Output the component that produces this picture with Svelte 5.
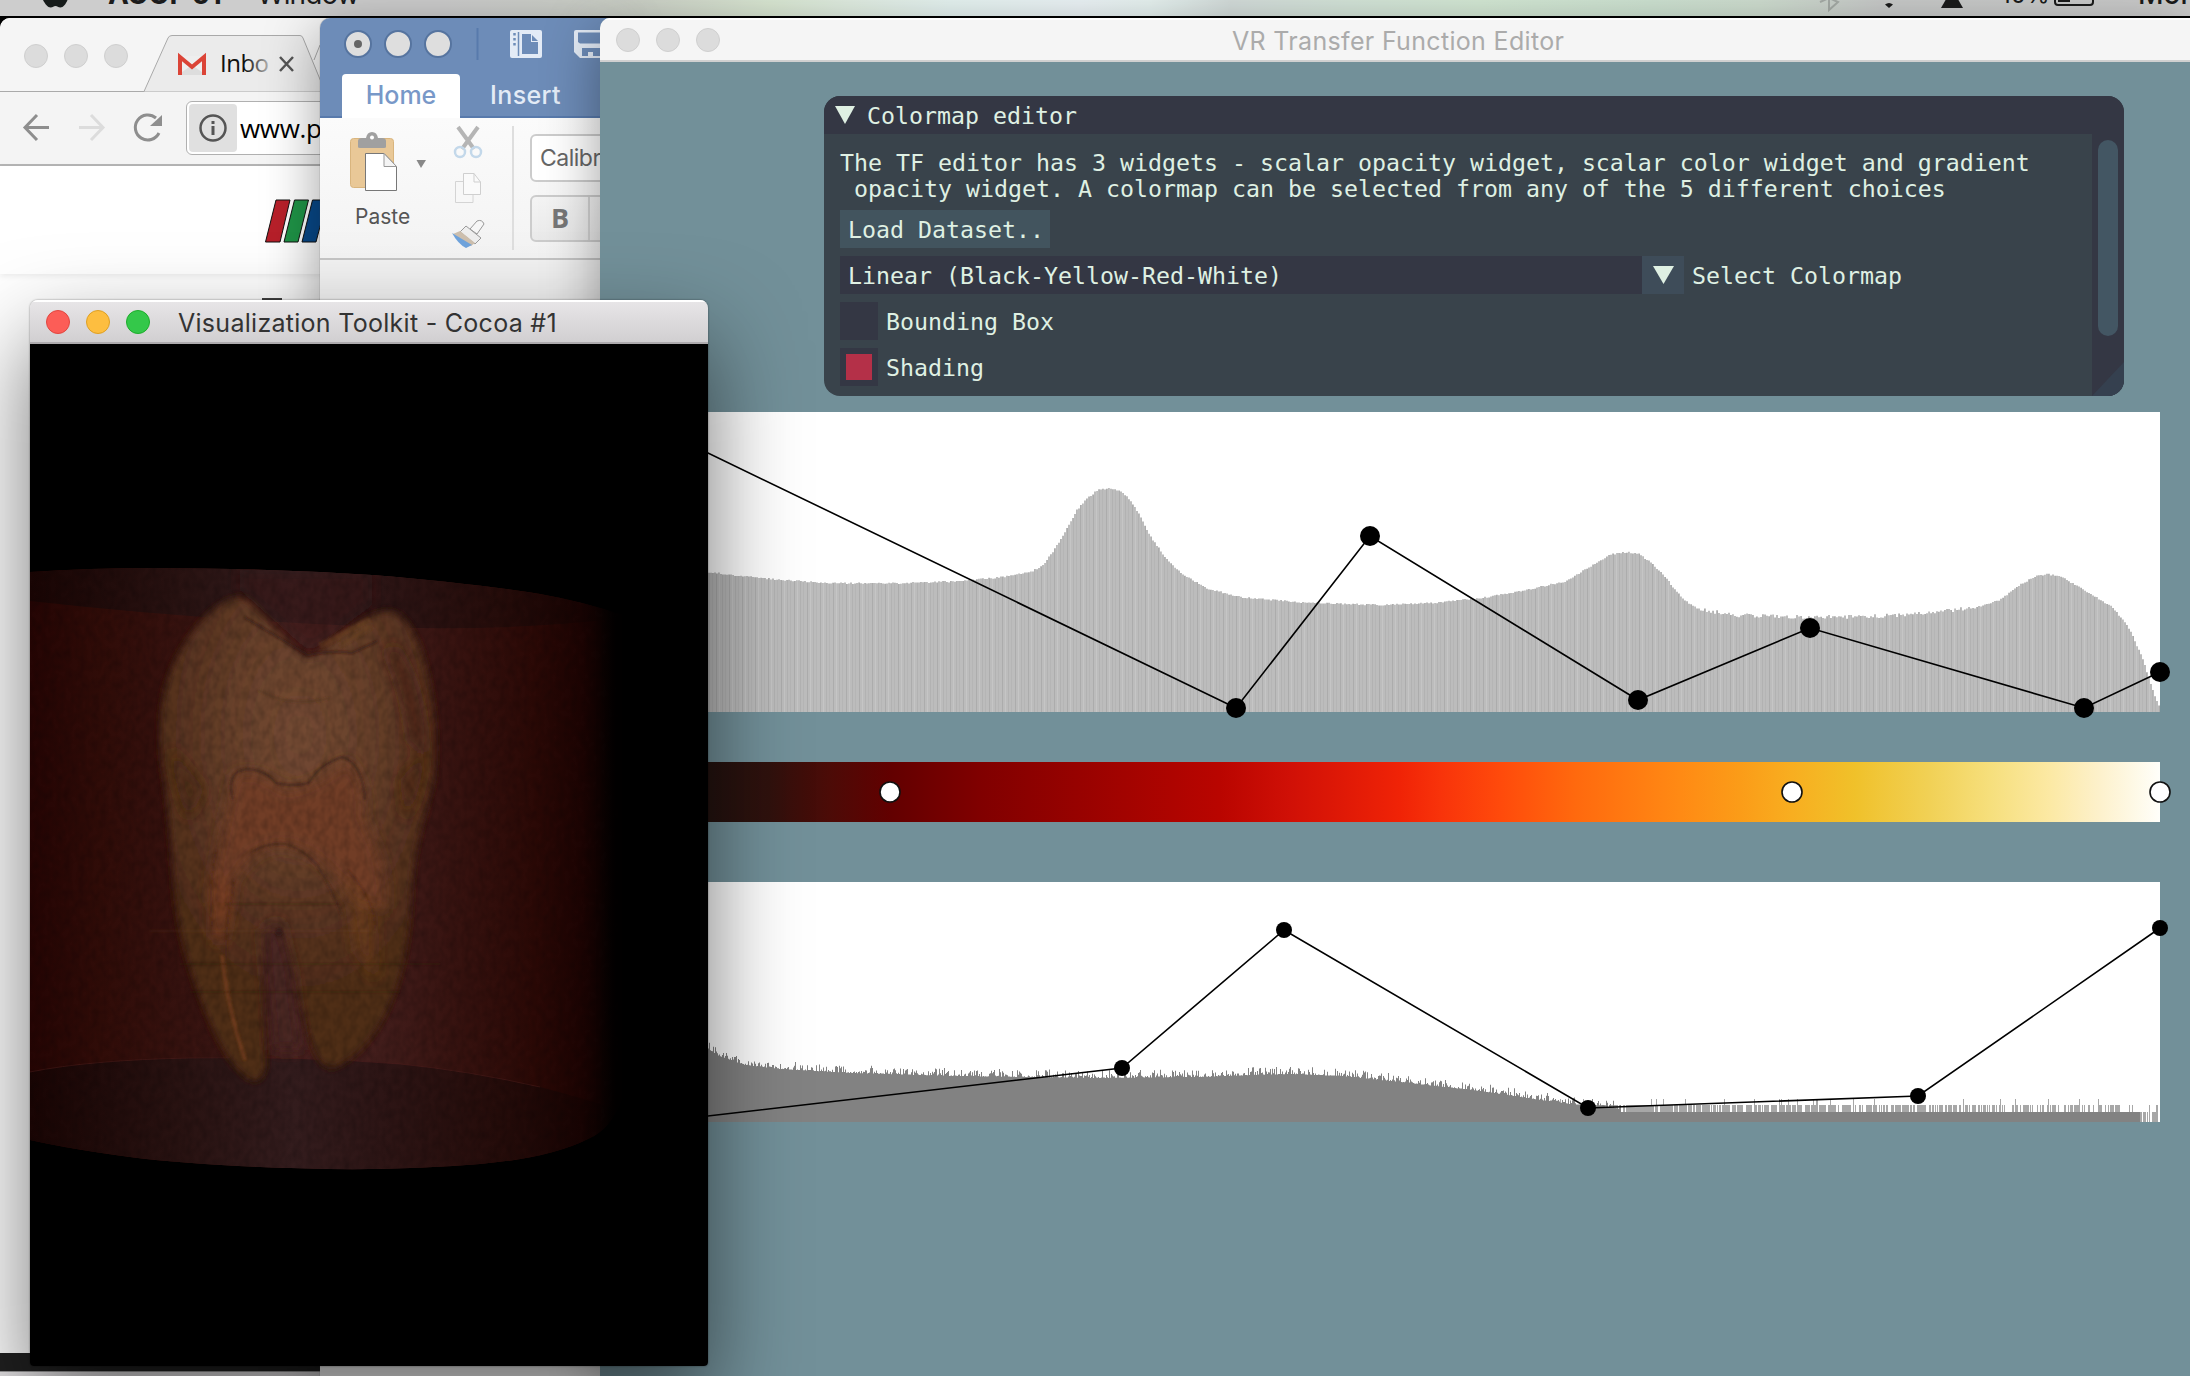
<script>
  // Deterministic pseudo-random jitter for the histogram tops
  const rnd = (i) => {
    const v = Math.sin(i * 127.1 + 11.7) * 43758.5453;
    return v - Math.floor(v);
  };

  function sample(points, x) {
    for (let i = 1; i < points.length; i++) {
      const [x0, y0] = points[i - 1];
      const [x1, y1] = points[i];
      if (x <= x1) return y0 + ((x - x0) / (x1 - x0)) * (y1 - y0);
    }
    return points[points.length - 1][1];
  }

  const scalarCurve = [
    [630, 560], [708, 573], [760, 579], [800, 582], [830, 584], [900, 584], [960, 582], [1000, 578],
    [1030, 573], [1042, 566], [1052, 553], [1064, 533], [1076, 511], [1086, 499], [1097, 491],
    [1108, 489], [1118, 491], [1126, 497], [1136, 511], [1148, 535], [1165, 559], [1180, 574],
    [1205, 589], [1240, 598], [1300, 603], [1380, 606], [1440, 603], [1480, 599], [1530, 590],
    [1565, 582], [1590, 567], [1608, 556], [1618, 553.5], [1627, 553], [1638, 555], [1650, 563],
    [1662, 575], [1673, 589], [1683, 601], [1700, 611], [1730, 617], [1800, 619], [1860, 619],
    [1920, 616], [1970, 610], [2000, 600], [2020, 585], [2035, 577], [2048, 575], [2062, 578],
    [2085, 592], [2110, 607], [2120, 618], [2130, 632], [2143, 663], [2151, 688], [2156, 702], [2160, 712]
  ];
  const gradientCurve = [
    [630, 960], [690, 1035], [708, 1049], [720, 1057], [745, 1065], [780, 1069], [850, 1073],
    [950, 1076], [1100, 1078], [1200, 1077], [1290, 1074], [1340, 1076], [1400, 1082],
    [1480, 1091], [1540, 1100], [1570, 1104], [1600, 1106], [1640, 1112], [2160, 1112]
  ];

  let scalarPath = 'M630 712';
  for (let x = 630; x < 2160; x += 2) {
    const y = sample(scalarCurve, x) - rnd(x) * (x > 1700 && x < 1970 ? 4 : 1.6);
    scalarPath += `V${y.toFixed(1)}H${x + 2}`;
  }
  scalarPath += 'V712Z';

  let gradientPath = 'M630 1122';
  for (let x = 630; x < 2140; x += 1) {
    const r = rnd(x + 0.3);
    let y = sample(gradientCurve, x) - r * r * r * 8;
    if (x > 1620) y = 1112;
    gradientPath += `V${y.toFixed(1)}H${x + 1}`;
  }
  gradientPath += 'V1122Z';

  // Thin outliers in the tail of the gradient histogram
  let tailPath = '';
  for (let x = 1560; x < 2158; x += 1) {
    const density = x < 1700 ? 0.12 : x < 1850 ? 0.25 : x < 2000 ? 0.4 : x < 2120 ? 0.55 : 0.85;
    if (rnd(x * 1.7) > density) {
      const tall = rnd(x * 3.1) > 0.93 ? 6 : 0;
      tailPath += `M${x} 1112V${1105 - tall}h1V1112Z`;
    }
    if (x >= 2140 && rnd(x * 2.3) > 0.35) tailPath += `M${x} 1122V1112h1V1122Z`;
  }

  const scalarLine = [[630, 415.3], [1236, 708], [1370, 536], [1638, 700], [1810, 628], [2084, 708], [2160, 672]];
  const gradientLine = [[630, 1125], [1122, 1068], [1284, 930], [1588, 1108], [1918, 1096], [2160, 928]];
  const colorStops = [890, 1792, 2160];
  const toPoints = (pts) => pts.map((p) => p.join(',')).join(' ');

  const colormap = [
    [708, '#241310'], [770, '#30110d'], [830, '#4c0b07'], [890, '#620000'], [980, '#800000'],
    [1220, '#b90500'], [1290, '#d01006'], [1400, '#f02306'], [1440, '#f8330a'], [1500, '#ff4a0b'],
    [1575, '#ff690e'], [1680, '#ff8a14'], [1740, '#fb9c18'], [1792, '#f8ae20'], [1855, '#f0c12a'],
    [1930, '#f1d156'], [1990, '#f6df7c'], [2050, '#fce9a4'], [2100, '#fdf1cc'], [2160, '#fffffa']
  ];
</script>

<div class="desktop">
  <header class="menubar">
    <svg class="apple" width="28" height="16" viewBox="0 0 28 16"><path d="M2 0C4 4 7 7.500 9.500 7.500C12 7.500 12.500 6 14.500 6C16.500 6 17 7.500 19.500 7.500C22 7.500 25 4 26.500 0Z" /></svg>
    <b class="app">AOOF 01</b>
    <span class="item">Window</span>
    <svg class="status" width="280" height="16" viewBox="1815 0 280 16">
      <path d="M1820 2L1838 -6M1820 -6L1838 2L1829 10V0" fill="none" stroke="#a6aca7" stroke-width="2" />
      <path d="M1885 4.500Q1889 1.500 1893 4.500L1889 8Z" />
      <path d="M1941 8L1949 -6H1955L1963 8Z" />
      <rect x="2055" y="-10" width="38" height="15" rx="3" fill="none" stroke="#1b1b1b" stroke-width="2" />
      <rect x="2058" y="-4" width="12" height="6" />
      <text x="2001" y="3" class="pct">10%</text>
    </svg>
    <span class="clock">Mon</span>
  </header>

  <!-- Browser -->
  <section class="window browser">
    <div class="tabs">
      <div class="lights"><i></i><i></i><i></i></div>
      <svg width="190" height="74" viewBox="140 18 190 74">
        <defs>
          <linearGradient id="fade" x1="221" x2="270" y1="0" y2="0" gradientUnits="userSpaceOnUse">
            <stop offset=".5" stop-color="#111" /><stop offset="1" stop-color="#bbb" />
          </linearGradient>
        </defs>
        <path d="M140 91.500H144L168 38Q169 35.500 172 35.500H300Q302 35.500 303 38L325 91.500" fill="#ebebeb" stroke="#a9a9a9" />
        <path d="M314 60L320 45" stroke="#a9a9a9" />
        <path d="M178 56V75H206V56Z" fill="#eee" />
        <path d="M178 75L192 65L206 75Z" fill="#ddd" />
        <path d="M180 75V57L192 67L204 57V75" fill="none" stroke="#db4437" stroke-width="4" />
        <text x="220" y="72" class="tabtext" fill="url(#fade)">Inbo</text>
        <path d="M280 57L293 71M293 57L280 71" stroke="#555" stroke-width="2.500" />
      </svg>
    </div>
    <div class="address">
      <svg class="nav" width="186" height="72" viewBox="0 92 186 72" fill="none" stroke-width="3">
        <g stroke="#8e8e8e"><path d="M49 127.500H25M37 115L25 127.500L37 140" /><path d="M159 133A12.500 12.500 0 1 1 156 118" /></g>
        <path d="M162 115V126H150Z" fill="#8e8e8e" />
        <path d="M79 127.500H103M91 115L103 127.500L91 140" stroke="#dcdcdc" />
      </svg>
      <div class="url">
        <span class="info"><svg width="30" height="30" viewBox="0 0 30 30"><circle cx="15" cy="15" r="12.500" fill="none" stroke="#555" stroke-width="2.500" /><path d="M15 13V22M15 8V11" stroke="#555" stroke-width="3" /></svg></span>
        <span>www.p</span>
      </div>
    </div>
    <div class="page">
      <div class="hero">
        <svg width="60" height="44" viewBox="264 199 60 44" stroke="#111">
          <path d="M276 200H290L280 242H265.500Z" fill="#b8202a" />
          <path d="M294.500 200H308.500L298 242H284Z" fill="#1f9447" />
          <path d="M312.500 200H327L316 242H302Z" fill="#08498a" />
        </svg>
      </div>
      <div class="mark"></div>
    </div>
    <div class="dark"></div>
    <div class="foot"></div>
  </section>

  <!-- Word processor -->
  <section class="window word">
    <div class="ribbonhead">
      <svg class="quick" width="280" height="44" viewBox="320 18 280 44">
        <g fill="#dedede" stroke="#56749f" stroke-width="2"><circle cx="358" cy="44" r="13" /><circle cx="398" cy="44" r="13" /><circle cx="438" cy="44" r="13" /></g>
        <circle cx="358" cy="44" r="4" fill="#666" />
        <path d="M477.500 28V60" stroke="#587aac" stroke-width="2" />
        <path d="M512 30H540Q542 30 542 32V56Q542 58 540 58H512Q510 58 510 56V32Q510 30 512 30Z" fill="#e3ebf6" />
        <path d="M518.500 32V56" stroke="#6d8cb8" stroke-width="1.500" />
        <path d="M514.500 33V46" stroke="#6d8cb8" stroke-width="2.500" stroke-dasharray="2.500 2.500" />
        <path d="M522 34H531V42H538V54H522Z" fill="#6d8cb8" /><path d="M532 35V41H538Z" fill="#6d8cb8" />
        <path d="M576 30H602V58H580L574 52V32Q574 30 576 30Z" fill="#e3ebf6" />
        <path d="M578 32.500H602V43.500H580L578 42ZM582 48H602V56H593V52H588V56H582Z" fill="#6d8cb8" />
      </svg>
      <div class="wtabs"><span class="home">Home</span><span class="insert">Insert</span></div>
    </div>
    <div class="ribbon">
      <div class="paste">
        <svg width="80" height="66" viewBox="346 130 80 66">
          <rect x="350.500" y="138.500" width="43" height="49" rx="3" fill="#e9c897" stroke="#d9b57e" />
          <path d="M358 147V141Q358 138 362 138H366Q367 132 372 132Q377 132 378 138H382Q386 138 386 141V147Q386 148 384 148H360Q358 148 358 147Z" fill="#a0a0a0" />
          <circle cx="372" cy="137.500" r="2" fill="#fff" />
          <path d="M365.500 153.500H384L396.500 166.500V190.500H365.500Z" fill="#fff" stroke="#777" /><path d="M384 153.500V166.500H396.500Z" fill="#f4f4f4" stroke="#999" />
          <path d="M416.500 160H426L421 168Z" fill="#888" />
        </svg>
        <span>Paste</span>
      </div>
      <svg class="edit" width="40" height="132" viewBox="448 122 40 132">
        <path d="M458 127L474 149M478 127L462 149" stroke="#b5b5b5" stroke-width="4" />
        <g fill="none" stroke="#c3d8ea" stroke-width="2.500"><circle cx="460" cy="152" r="5" /><circle cx="476" cy="152" r="5" /></g>
        <path d="M455.500 181.500H473V202.500H455.500Z" fill="#f7f7f7" stroke="#d4d4d4" /><path d="M463.500 173.500H474L480.500 182V194.500H463.500Z" fill="#fafafa" stroke="#cfcfcf" /><path d="M474 173.500V182H480.500" fill="none" stroke="#cfcfcf" />
        <path d="M470 229L477 221Q482 219 484 224L477 234Z" fill="#f6f6f6" stroke="#999" />
        <path d="M466 226L481 238L475 244L460 232Z" fill="#eee" stroke="#999" />
        <path d="M460 231L475 243L471 246L453 234Z" fill="#cdbfae" />
        <path d="M452 233L472 245L466 248Q458 244 452 233Z" fill="#6fa3dc" />
      </svg>
      <div class="fonts"><div class="fontname">Calibri</div><div class="bold"><b>B</b></div></div>
    </div>
  </section>

  <!-- Transfer function editor -->
  <section class="window editor">
    <div class="titlebar"><div class="lights"><i></i><i></i><i></i></div><span class="title">VR Transfer Function Editor</span></div>
    <div class="canvas">
      <div class="panel">
        <div class="panelhead"><svg width="20" height="18"><path d="M0 0H20L10 18Z" /></svg><span>Colormap editor</span></div>
        <div class="panelbody">
          <div class="controls">
            <p>The TF editor has 3 widgets - scalar opacity widget, scalar color widget and gradient
 opacity widget. A colormap can be selected from any of the 5 different choices</p>
            <div class="button">Load Dataset..</div>
            <div class="row"><div class="combo">Linear (Black-Yellow-Red-White)</div><div class="drop"><svg width="21" height="18"><path d="M0 0H21L10.500 18Z" /></svg></div><span>Select Colormap</span></div>
            <div class="row"><div class="check"></div><span>Bounding Box</span></div>
            <div class="row"><div class="check"><i></i></div><span>Shading</span></div>
          </div>
          <div class="scroll"><div class="thumb"></div><svg width="32" height="34"><path class="grip" d="M32 0V34H0Z" /></svg></div>
        </div>
      </div>

      <svg class="chart scalar" width="1530" height="300" viewBox="630 412 1530 300">
        <defs>
          <pattern id="bars" width="13" height="10" patternUnits="userSpaceOnUse">
            <rect width="13" height="10" fill="#bcbcbc" /><rect x="1" width="1" height="10" fill="#acacac" /><rect x="4" width="1" height="10" fill="#c5c5c5" /><rect x="7" width="1" height="10" fill="#b2b2b2" /><rect x="10" width="1" height="10" fill="#b5b5b5" />
          </pattern>
        </defs>
        <rect x="630" y="412" width="1530" height="300" fill="#fff" />
        <path d={scalarPath} fill="url(#bars)" />
        <polyline points={toPoints(scalarLine)} fill="none" stroke="#000" stroke-width="1.600" />
        {#each scalarLine as [x, y]}<circle cx={x} cy={y} r="10" />{/each}
      </svg>

      <svg class="chart colors" width="1530" height="60" viewBox="630 762 1530 60">
        <defs>
          <linearGradient id="cmap" gradientUnits="userSpaceOnUse" x1="708" x2="2160" y1="0" y2="0">
            {#each colormap as [x, c]}<stop offset={(x - 708) / 1452} stop-color={c} />{/each}
          </linearGradient>
        </defs>
        <rect x="630" y="762" width="1530" height="60" fill="url(#cmap)" />
        {#each colorStops as x}<circle cx={x} cy="792" r="10" fill="#fff" stroke="#111" stroke-width="1.600" />{/each}
      </svg>

      <svg class="chart gradient" width="1530" height="240" viewBox="630 882 1530 240">
        <rect x="630" y="882" width="1530" height="240" fill="#fff" />
        <path d={gradientPath} fill="#828282" />
        <path d={tailPath} fill="#828282" fill-opacity=".7" shape-rendering="crispEdges" />
        <polyline points={toPoints(gradientLine)} fill="none" stroke="#000" stroke-width="1.600" />
        {#each gradientLine as [x, y]}<circle cx={x} cy={y} r="8" />{/each}
      </svg>
    </div>
  </section>

  <!-- Volume rendering -->
  <section class="window volume">
    <div class="titlebar active"><div class="lights"><i class="red"></i><i class="yellow"></i><i class="green"></i></div><span class="title">Visualization Toolkit - Cocoa #1</span></div>
    <svg class="render" width="678" height="1022" viewBox="30 344 678 1022">
      <defs>
        <linearGradient id="wall" gradientUnits="userSpaceOnUse" x1="30" x2="616" y1="0" y2="0">
          <stop offset="0" stop-color="#250504" /><stop offset=".12" stop-color="#300c08" /><stop offset=".3" stop-color="#381411" /><stop offset=".45" stop-color="#47211f" /><stop offset=".6" stop-color="#421d1b" /><stop offset=".72" stop-color="#371310" /><stop offset=".86" stop-color="#2b0906" /><stop offset=".94" stop-color="#1d0403" /><stop offset="1" stop-color="#050101" />
        </linearGradient>
        <linearGradient id="cap" gradientUnits="userSpaceOnUse" x1="30" x2="616" y1="0" y2="0">
          <stop offset="0" stop-color="#190504" /><stop offset=".25" stop-color="#281211" /><stop offset=".45" stop-color="#331c1d" /><stop offset=".6" stop-color="#2d1515" /><stop offset=".8" stop-color="#250c0a" /><stop offset=".94" stop-color="#180403" /><stop offset="1" stop-color="#050101" />
        </linearGradient>
        <radialGradient id="enamel" gradientUnits="userSpaceOnUse" cx="300" cy="735" r="190" gradientTransform="translate(300 735) scale(.82 1.35) translate(-300 -735)">
          <stop offset="0" stop-color="#734932" /><stop offset=".4" stop-color="#69422c" /><stop offset=".75" stop-color="#593421" /><stop offset="1" stop-color="#502d19" />
        </radialGradient>
        <filter id="soft" x="-10%" y="-10%" width="120%" height="120%"><feGaussianBlur stdDeviation="3" /></filter>
        <filter id="soft1"><feGaussianBlur stdDeviation="1.200" /></filter>
        <filter id="soft6" x="-30%" y="-30%" width="160%" height="160%"><feGaussianBlur stdDeviation="7" /></filter>
        <filter id="edge" x="-100%" width="300%" y="-10%" height="120%"><feGaussianBlur stdDeviation="9" /></filter>
        <filter id="grain" x="0" y="0" width="100%" height="100%">
          <feTurbulence type="fractalNoise" baseFrequency=".14 .1" numOctaves="2" seed="4" />
          <feColorMatrix values="0 0 0 0 0  0 0 0 0 0  0 0 0 0 0  .9 0 0 0 -.3" />
        </filter>
        <clipPath id="body"><path d="M30 572Q90 568 154 568Q260 568 372 575Q470 583 540 594Q585 602 622 615V1100Q610 1130 588 1139Q550 1158 480 1164Q410 1170 330 1169Q210 1167 130 1157Q70 1149 30 1140Z" /></clipPath>
      </defs>
      <rect x="30" y="344" width="678" height="1022" />
      <g clip-path="url(#body)">
        <rect x="30" y="560" width="594" height="620" fill="url(#wall)" />
        <path d="M30 560H624V618Q500 632 380 627Q200 620 30 601Z" fill="url(#cap)" />
        <path d="M30 1072Q90 1060 190 1058Q300 1056 400 1064Q470 1071 540 1087Q590 1100 624 1112V1180H30Z" fill="url(#cap)" />
        <path d="M30 1072Q90 1060 190 1058Q300 1056 400 1064Q470 1071 540 1087" fill="none" stroke="#51201d" stroke-opacity=".5" />
        <g filter="url(#soft)">
          <path d="M236 597C215 603 195 625 180 650C162 680 157 720 161 760C167 800 170 830 173 880C176 930 188 970 205 1012C218 1045 233 1070 250 1080C260 1084 267 1076 266 1058C264 1010 262 970 268 945Q276 925 284 944C290 975 300 1000 307 1030C314 1060 325 1072 337 1067C355 1058 374 1040 388 1010C404 975 410 940 412 890C415 840 428 810 434 780C439 740 434 690 422 650C412 624 400 610 386 611C365 614 345 630 318 652Q308 661 297 650C278 630 262 612 250 600Q243 595 236 597Z" fill="url(#enamel)" stroke="#2a0e0a" stroke-width="4" stroke-opacity=".5" />
        </g>
        <g filter="url(#soft6)">
          <path d="M262 930L280 920L292 970L302 1050H272Z" fill="#482524" />
          <path d="M234 775Q255 765 285 790Q320 785 345 760Q365 770 365 820Q390 870 385 910L350 900Q325 850 280 845Q240 850 222 910L208 900Q222 830 234 775Z" fill="#713d28" />
          <path d="M212 870L234 890L224 940L214 940Z" fill="#783c22" />
          <path d="M345 870L372 900L376 980L356 950Z" fill="#70401f" fill-opacity=".7" />
          <path d="M395 645Q425 690 426 760L410 740Q405 690 385 650Z" fill="#482319" fill-opacity=".8" />
          <path d="M170 745Q175 790 188 820L205 790Q188 770 170 745Z" fill="#4a270f" fill-opacity=".7" />
          <path d="M425 750Q420 800 405 820L400 780Z" fill="#4a2710" fill-opacity=".8" />
          <path d="M240 590L310 652L372 605V570H240Z" fill="#3a1c1c" fill-opacity=".45" />
        </g>
        <g fill="none" filter="url(#soft1)">
          <path d="M222 955Q228 1010 245 1060" stroke="#84451f" stroke-width="4" stroke-opacity=".55" />
          <path d="M233 800Q225 770 248 769Q266 770 276 783Q292 787 309 783Q318 765 342 757Q362 762 365 800" stroke="#3b2118" stroke-width="2" stroke-opacity=".75" />
          <path d="M252 852Q265 843 285 844Q302 848 318 866Q332 890 342 915" stroke="#4a2a1e" stroke-width="1.600" />
          <path d="M234 880Q225 930 226 960M216 850Q208 890 212 925M348 870Q375 900 375 930" stroke="#4a2618" stroke-width="1.500" stroke-opacity=".6" />
          <path d="M244 617L308 655Q330 650 352 653L378 641" stroke="#32170f" stroke-width="2.500" stroke-opacity=".6" />
          <path d="M320 646L370 620M340 645L372 626" stroke="#704522" stroke-width="6" stroke-opacity=".5" />
          <path d="M258 690Q290 708 330 698" stroke="#54351f" stroke-width="2" stroke-opacity=".6" />
          <path d="M180 964H440M190 992H400M225 904H340" stroke="#2a100c" stroke-width="2" stroke-opacity=".35" />
          <path d="M150 931H370" stroke="#824b36" stroke-opacity=".3" />
          <circle cx="279" cy="932" r="4" fill="#2e1416" fill-opacity=".6" />
        </g>
        <rect x="30" y="560" width="594" height="620" filter="url(#grain)" opacity=".38" />
      </g>
      <rect x="612" y="560" width="20" height="620" filter="url(#edge)" />
    </svg>
  </section>
</div>

<style>
  :global(body) { margin: 0; overflow: hidden; }
  .desktop { position: relative; width: 2190px; height: 1376px; overflow: hidden; background: #000; font-family: Inter, "Liberation Sans", sans-serif; }
  .menubar { box-sizing: border-box; display: flex; height: 16px; padding-left: 41px; overflow: hidden; color: #1b1b1b; font-size: 28px; line-height: 0; background: linear-gradient(90deg, #cdcdcd 0, #cdcdcd 440px, #cdd2c8 640px, #dbe9d4 770px, #e2efe3 850px, #e7f5f3 950px, #edf5f8 1080px, #e8f4f2 1150px, #d5dedc 1230px, #d5e6da 1350px, #d5ead6 1480px, #cfe4d3 1650px, #d0dfd1 1760px, #c9cbca 1880px, #cbcbcb 2190px); }
  .apple { fill: #161b1a; flex: none; }
  .app, .item, .clock { flex: none; margin-top: -6px; white-space: nowrap; }
  .app { width: 149px; margin-left: 39px; letter-spacing: -.5px; }
  .item { width: 1558px; letter-spacing: -.9px; }
  .status { flex: none; fill: #1b1b1b; }
  .pct { font-size: 24px; }
  .clock { margin-left: 43px; font-weight: 500; }

  .window { position: absolute; display: flex; flex-direction: column; overflow: hidden; }
  .lights { display: flex; gap: 16px; }
  .lights i { box-sizing: border-box; width: 24px; height: 24px; border: 1px solid #cfcfcf; border-radius: 50%; background: #dcdcdc; }

  .browser { left: 0; top: 18px; width: 340px; height: 1358px; border-radius: 10px 0 0 0; background: #fff; }
  .tabs { display: flex; height: 74px; background: #f5f5f5; box-shadow: inset 0 -1px #aaa; }
  .tabs .lights { width: 116px; padding: 26px 0 0 24px; }
  .tabtext { font: 24px "Open Sans", sans-serif; letter-spacing: -.5px; }
  .address { display: flex; height: 72px; border-bottom: 2px solid #b5b5b5; background: #f4f4f4; }
  .nav { flex: none; }
  .url { box-sizing: border-box; flex: none; display: flex; align-items: center; gap: 3px; width: 200px; height: 54px; margin-top: 9px; padding-left: 2px; border: 1px solid #b0b0b0; border-radius: 6px; background: #fff; font: 26px "Open Sans", sans-serif; letter-spacing: -.3px; }
  .info { display: grid; place-items: center; width: 48px; height: 48px; border-radius: 4px; background: #e0e0e0; flex: none; }
  .page { display: flex; flex-direction: column; height: 1188px; }
  .hero { box-sizing: border-box; flex: none; height: 108px; padding: 33px 0 0 264px; box-shadow: 0 2px 6px rgba(0, 0, 0, .08); }
  .mark { width: 20px; height: 2px; margin: 24px 0 0 262px; background: #444; }
  .dark { height: 18px; background: #202020; }
  .foot { height: 4px; border-top: 1px solid #999; background: #e6e4e6; }

  .word { left: 320px; top: 18px; width: 290px; height: 1358px; border-radius: 10px 0 0 0; background: #f2f2f2; box-shadow: 0 14px 56px rgba(0, 0, 0, .38), 0 0 1px #555; }
  .ribbonhead { display: flex; flex-direction: column; height: 100px; background: #6d8cb8; box-shadow: inset 0 -2px #587aac; }
  .quick { flex: none; }
  .wtabs { display: flex; height: 44px; margin-top: 12px; padding-left: 22px; font-size: 25px; line-height: 42px; }
  .home { box-sizing: border-box; width: 118px; border-radius: 4px 4px 0 0; background: #fff; color: #7898c8; font-weight: 500; text-align: center; }
  .insert { margin-left: 30px; color: #e3ebf6; font-weight: 500; letter-spacing: .4px; }
  .ribbon { display: flex; height: 140px; border-bottom: 2px solid #c6c6c6; background: linear-gradient(#fbfbfb, #f3f3f3); }
  .paste { flex: none; display: flex; flex-direction: column; width: 80px; margin: 12px 0 0 26px; }
  .paste span { margin: 7px 0 0 9px; color: #555; font-size: 21px; line-height: 28px; }
  .edit { flex: none; margin: 4px 0 0 22px; }
  .fonts { flex: none; margin: 8px 0 0 24px; padding: 8px 0 0 16px; width: 80px; height: 116px; border-left: 2px solid #dedede; }
  .fontname, .bold { box-sizing: border-box; width: 90px; height: 48px; border: 2px solid #ccc; border-radius: 6px; background: #fff; color: #666; }
  .fontname { padding-left: 8px; font-size: 23px; letter-spacing: -.5px; line-height: 44px; }
  .bold { height: 47px; margin-top: 13px; background: linear-gradient(#f4f4f4, #eaeaea); font: 27px/42px "Open Sans", sans-serif; color: #777; }
  .bold b { display: block; width: 56px; height: 43px; border-right: 2px solid #d4d4d4; text-align: center; }

  .editor { left: 600px; top: 18px; width: 1590px; height: 1358px; border-radius: 10px 0 0 0; background: #729099; box-shadow: 0 14px 56px rgba(0, 0, 0, .38); }
  .titlebar { position: relative; box-sizing: border-box; flex: none; display: flex; align-items: flex-start; height: 44px; padding: 10px 0 0 16px; border-bottom: 2px solid #d0d0d0; background: #f5f5f5; box-shadow: inset 0 2px #fff; color: #ababab; font-size: 25px; line-height: 26px; }
  .title { white-space: nowrap; }
  .editor .title { margin-left: 512px; letter-spacing: .32px; }
  .canvas { padding: 34px 0 0 30px; }
  .panel { width: 1300px; height: 300px; margin-left: 194px; border-radius: 16px; overflow: hidden; background: #39434b; color: #dff0e3; font: 23.25px/26px "DejaVu Sans Mono", monospace; white-space: nowrap; }
  .panel svg { fill: #dff0e3; }
  .panel .grip { fill: #35404f; }
  .panelhead { display: flex; align-items: center; height: 38px; padding-left: 11px; background: #343744; }
  .panelhead span { margin: 2px 0 0 12px; }
  .panelbody { display: flex; justify-content: space-between; height: 262px; }
  .controls { display: flex; flex-direction: column; gap: 8px; padding: 16px 0 0 16px; }
  .controls p { margin: 0; height: 52px; white-space: pre; }
  .button { align-self: flex-start; box-sizing: border-box; width: 210px; height: 38px; padding-left: 8px; line-height: 39px; background: #42545e; }
  .row { display: flex; height: 38px; line-height: 39px; }
  .combo { box-sizing: border-box; width: 802px; padding-left: 8px; background: #343744; }
  .drop { display: grid; place-items: center; width: 42px; background: #3e4c59; }
  .row span { margin-left: 8px; }
  .check { display: grid; place-items: center; width: 38px; height: 38px; background: #343744; }
  .check i { width: 26px; height: 26px; background: #b43048; }
  .scroll { box-sizing: border-box; display: flex; flex-direction: column; justify-content: space-between; align-items: center; width: 32px; padding-top: 6px; background: #343744; }
  .thumb { width: 20px; height: 196px; border-radius: 10px; background: #435663; }
  .chart { display: block; overflow: visible; }
  .scalar { margin-top: 16px; }
  .colors { margin-top: 50px; }
  .gradient { margin-top: 60px; }

  .volume { left: 30px; top: 300px; width: 678px; height: 1066px; border-radius: 8px 8px 4px 4px; box-shadow: 0 40px 90px rgba(0, 0, 0, .55), 0 0 2px rgba(0, 0, 0, .5); }
  .active { border-color: #aeabae; background: linear-gradient(#e8e6e8, #d1cfd1); color: #333; }
  .volume .title { margin-left: 28px; letter-spacing: .28px; }
  .lights .red { border-color: #e2463f; background: #fc5d57; }
  .lights .yellow { border-color: #dfa023; background: #fdbe40; }
  .lights .green { border-color: #1dad2b; background: #34c84a; }
  .render { display: block; flex: none; }
</style>
